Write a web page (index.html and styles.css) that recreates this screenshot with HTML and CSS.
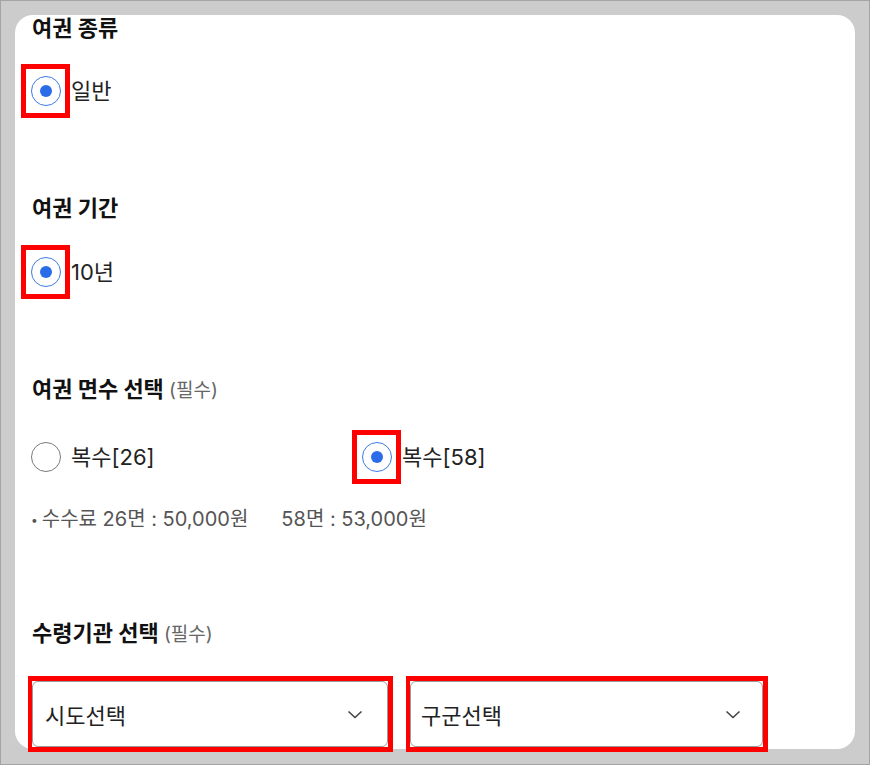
FILE: index.html
```html
<!DOCTYPE html>
<html lang="ko">
<head>
<meta charset="utf-8">
<title>여권 신청</title>
<link rel="stylesheet" href="styles.css">
</head>
<body>
<div class="card">
  <h2 class="heading h-type">여권 종류</h2>
  <div class="options row-type">
    <label class="opt">
      <span class="radio-wrap mark"><span class="radio checked"></span></span>
      <span class="opt-label">일반</span>
    </label>
  </div>

  <h2 class="heading h-period">여권 기간</h2>
  <div class="options row-period">
    <label class="opt">
      <span class="radio-wrap mark"><span class="radio checked"></span></span>
      <span class="opt-label">10년</span>
    </label>
  </div>

  <h2 class="heading h-pages">여권 면수 선택 <span class="req">(필수)</span></h2>
  <div class="options two-col row-pages">
    <label class="opt">
      <span class="radio-wrap"><span class="radio"></span></span>
      <span class="opt-label">복수[26]</span>
    </label>
    <label class="opt">
      <span class="radio-wrap mark"><span class="radio checked"></span></span>
      <span class="opt-label">복수[58]</span>
    </label>
  </div>
  <p class="fee"><span class="bullet">•</span>수수료 26면 : 50,000원<span class="fee-2">58면 : 53,000원</span></p>

  <h2 class="heading h-office">수령기관 선택 <span class="req">(필수)</span></h2>
  <div class="selects">
    <div class="sel-mark">
      <div class="select">
        <span class="select-text">시도선택</span>
        <svg class="chev" width="16" height="9" viewBox="0 0 16 9"><path d="M1.5 1.5 L8 7.5 L14.5 1.5" fill="none" stroke="#444" stroke-width="1.6"/></svg>
      </div>
    </div>
    <div class="sel-mark">
      <div class="select select-2">
        <span class="select-text">구군선택</span>
        <svg class="chev" width="16" height="9" viewBox="0 0 16 9"><path d="M1.5 1.5 L8 7.5 L14.5 1.5" fill="none" stroke="#444" stroke-width="1.6"/></svg>
      </div>
    </div>
  </div>
</div>
</body>
</html>
```

FILE: styles.css
```css
html, body {
  margin: 0;
  padding: 0;
}
body {
  box-sizing: border-box;
  width: 870px;
  height: 765px;
  border: 1px solid #a4a4a4;
  background: #cccccc;
  padding: 14px;
  font-family: Inter, "Noto Sans CJK KR", sans-serif;
  color: #222;
  overflow: hidden;
}
.card {
  box-sizing: border-box;
  height: 734px;
  background: #ffffff;
  border-radius: 18px;
  padding: 0 0 0 16px;
}
.heading {
  margin: 0;
  font-size: 22px;
  line-height: 26px;
  font-weight: 700;
  color: #111;
  padding-left: 1px;
}
.req {
  font-size: 19px;
  font-weight: 400;
  color: #666;
}
.h-period { margin-top: 82px; }
.h-pages { margin-top: 82px; }
.h-office { margin-top: 88px; }

.options {
  display: flex;
}
.row-type { margin-top: 28px; }
.row-period { margin-top: 29px; }
.row-pages { margin-top: 31px; }
.two-col .opt { width: 331px; }

.opt {
  display: flex;
  align-items: center;
}
.radio-wrap {
  display: block;
  margin-left: -5px;
  padding: 7px 4px 7px 5px;
}
.mark {
  outline: 5px solid #ff0000;
}
.radio {
  box-sizing: border-box;
  display: flex;
  align-items: center;
  justify-content: center;
  width: 30px;
  height: 30px;
  border: 1px solid #7a7a7a;
  border-radius: 50%;
  background: #fff;
}
.radio.checked {
  border-color: #3d7be6;
}
.radio.checked::after {
  content: "";
  width: 12px;
  height: 12px;
  border-radius: 50%;
  background: #2b6de8;
}
.opt-label {
  margin-left: 6px;
  font-size: 22px;
  line-height: 28px;
  color: #222;
}

.fee {
  margin: 28px 0 0 0;
  font-size: 20px;
  line-height: 24px;
  color: #555;
}
.bullet {
  font-size: 12px;
  margin-right: 4px;
  vertical-align: 2px;
}
.fee-2 {
  margin-left: 33px;
}

.selects {
  margin-top: 28px;
  margin-left: -3px;
  display: grid;
  grid-template-columns: 365px 362px;
  column-gap: 13px;
}
.sel-mark {
  border: 5px solid #ff0000;
  border-left-width: 4px;
}
.select {
  box-sizing: border-box;
  height: 66px;
  border: 1px solid #9a9a9a;
  border-radius: 6px;
  background: #fff;
  display: flex;
  align-items: center;
  justify-content: space-between;
  padding: 0 24px 0 12px;
}
.select-2 {
  padding: 0 21px 0 10px;
}
.select-text {
  font-size: 22px;
  color: #222;
}
.chev {
  display: block;
}
```
